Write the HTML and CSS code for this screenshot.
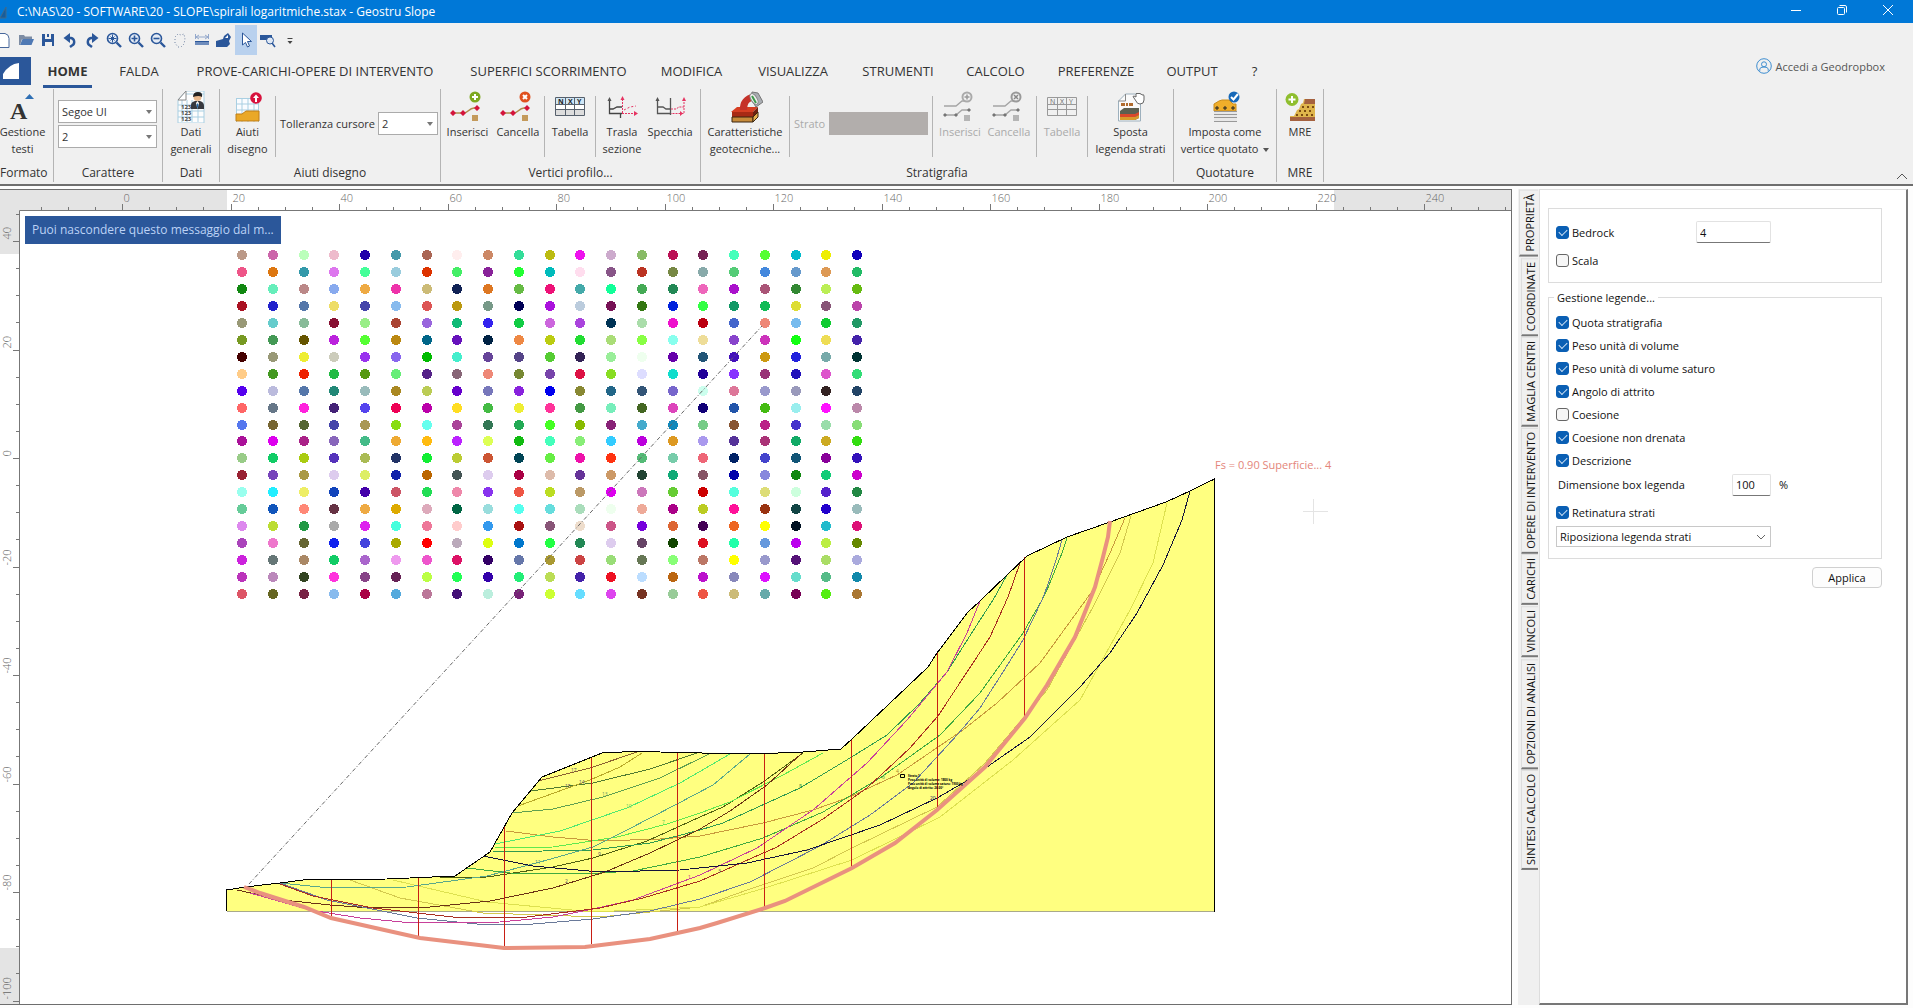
FILE: index.html
```html
<!DOCTYPE html>
<html lang="it">
<head>
<meta charset="utf-8">
<title>Geostru Slope</title>
<link rel="stylesheet" href="styles.css">
</head>
<body>
<svg width="0" height="0" class="defs" aria-hidden="true">
  <symbol id="i-lens" viewBox="0 0 16 16"><circle cx="6.500" cy="6.500" r="5" fill="#e4ebf5" stroke="#2b579a" stroke-width="1.600"/><path d="M10.500 10.500l4.500 4.500" stroke="#2b579a" stroke-width="2.400"/></symbol>
  <symbol id="i-undo" viewBox="0 0 16 16"><path d="M4 6h5a4 4 0 0 1 1 7.500L8 15" fill="none" stroke="#2b579a" stroke-width="2.400"/><path d="M8 1L1.500 6 8 11z" fill="#2b579a"/></symbol>
  <symbol id="i-poly" viewBox="0 0 36 32"><path d="M3 22h11c4 0 5-5 10-5h4" fill="none" stroke="#b08a4a" stroke-width="1.500"/><g fill="#d4143c"><path d="M0 22l3-3 3 3-3 3zM10 22l3-3 3 3-3 3zM24 17l3-3 3 3-3 3z"/></g><path fill="#c49a5c" d="M22 24h6v6h-6z"/></symbol>
  <symbol id="i-poly2" viewBox="0 0 36 32"><g fill="none" stroke="#a4a4a4" stroke-width="1.300"><path d="M2 15h12l6-5h3"/><path d="M3 24h11l6-5h8"/></g><g fill="#757575"><path d="M1 24l2-2 2 2-2 2zM12 24l2-2 2 2-2 2zM25 19l2-2 2 2-2 2z"/></g><path fill="#b5b5b5" d="M22 24h6v6h-6z"/></symbol>
</svg>

<header class="titlebar">
  <svg class="app-mark" viewBox="0 0 10 14"><path d="M0 13L6 2v11z" fill="#165d9c" stroke="#3f6a8c"/></svg>
  <h1>C:\NAS\20 - SOFTWARE\20 - SLOPE\spirali logaritmiche.stax - Geostru Slope</h1>
  <div class="win-buttons">
    <button aria-label="Riduci"><svg viewBox="0 0 12 12"><path d="M1 6.500h10"/></svg></button>
    <button aria-label="Ripristina"><svg viewBox="0 0 12 12"><rect x="1.500" y="3.500" width="7" height="7" rx="1"/><path d="M3.500 1.500h5.500q1.500 0 1.500 1.500v5.500"/></svg></button>
    <button aria-label="Chiudi"><svg viewBox="0 0 12 12"><path d="M1 1l10 10M11 1L1 11"/></svg></button>
  </div>
</header>

<section class="ribbon">
  <nav class="quick" aria-label="Accesso rapido">
    <button aria-label="Nuovo"><svg viewBox="0 0 16 16"><path d="M0 1.500h9q4 1 4 5v9H0" fill="#fff" stroke="#49689c"/></svg></button>
    <button aria-label="Apri"><svg viewBox="0 0 16 16"><path d="M1 3h5l1 1.500h7V7H4l-2 6H1z" fill="#7d8ca3"/><path d="M4.500 7H16l-2.500 6H2z" fill="#4f79b4"/></svg></button>
    <button aria-label="Salva"><svg viewBox="0 0 16 16"><path d="M2 2h3v5h6V2h3v12h-2v-4H5v4H2z" fill="#2b579a"/><path d="M7 2h2v3H7z" fill="#2b579a"/></svg></button>
    <button aria-label="Annulla"><svg viewBox="0 0 16 16"><use href="#i-undo"/></svg></button>
    <button aria-label="Ripeti"><svg viewBox="0 0 16 16"><g transform="matrix(-1 0 0 1 16 0)"><use href="#i-undo"/></g></svg></button>
    <button aria-label="Zoom finestra"><svg viewBox="0 0 16 16"><use href="#i-lens"/><path d="M6.500 2.500v8M2.500 6.500h8M4.500 4.500l4 4M8.500 4.500l-4 4" stroke="#2b579a"/></svg></button>
    <button aria-label="Zoom avanti"><svg viewBox="0 0 16 16"><use href="#i-lens"/><path d="M6.500 3.500v6M3.500 6.500h6" stroke="#2b579a" stroke-width="1.600"/></svg></button>
    <button aria-label="Zoom indietro"><svg viewBox="0 0 16 16"><use href="#i-lens"/><path d="M3.500 6.500h6" stroke="#2b579a" stroke-width="1.600"/></svg></button>
    <button aria-label="Panoramica"><svg viewBox="0 0 16 16"><path d="M3 5l3-3 3 1 3-1 1 5-1 5-3 3H6l-3-4z" fill="none" stroke="#7386a5" stroke-dasharray="1 2"/></svg></button>
    <button aria-label="Misura"><svg viewBox="0 0 16 16"><path d="M1 10h14v3H1z" fill="#6e8cbc"/><path d="M1 9.500h14" stroke="#2b579a"/><path d="M1.500 2v5M14.500 2v5M2 5h12M5 3L2 5l3 2M11 3l3 2-3 2" fill="none" stroke="#93a8cb"/></svg></button>
    <button aria-label="Rigenera"><svg viewBox="0 0 16 16"><path d="M0 15V9l7-2 1-3 4-3 3 4-2 4 1 3-3 3z" fill="#2b579a"/><path d="M9 6l3-3v3z" fill="#fff"/></svg></button>
    <button class="on" aria-label="Seleziona"><svg viewBox="0 0 16 16"><path d="M4.500 1v12l3-2.500 2 4.500 2-1-2-4.500h4z" fill="#fff" stroke="#2b579a"/></svg></button>
    <button aria-label="Cerca oggetto"><svg viewBox="0 0 16 16"><path d="M0 3h12v5H0z" fill="#2b579a"/><circle cx="10" cy="8.500" r="3.500" fill="#dfe8f4" stroke="#2b579a"/><path d="M12 11l3 4" stroke="#2b579a" stroke-width="1.600"/></svg></button>
    <button aria-label="Personalizza"><svg viewBox="0 0 16 16"><path d="M5.500 6.500h5" stroke="#444"/><path d="M5.500 9h5L8 12z" fill="#444"/></svg></button>
  </nav>

  <div class="tabbar">
    <button class="file" aria-label="File"><svg viewBox="0 0 31 28"><path d="M3 22V17Q9 7 19 6v16z" fill="#fff"/></svg></button>
    <nav class="tabs">
      <a href="#home" class="active">HOME</a><a href="#falda">FALDA</a><a href="#prove">PROVE-CARICHI-OPERE DI INTERVENTO</a><a href="#superfici">SUPERFICI SCORRIMENTO</a><a href="#modifica">MODIFICA</a><a href="#visualizza">VISUALIZZA</a><a href="#strumenti">STRUMENTI</a><a href="#calcolo">CALCOLO</a><a href="#preferenze">PREFERENZE</a><a href="#output">OUTPUT</a><a href="#help">?</a>
    </nav>
    <a href="#login" class="login"><svg viewBox="0 0 16 16" fill="none" stroke="#3f8ed0"><circle cx="8" cy="8" r="7.300"/><circle cx="8" cy="6.300" r="2.500"/><path d="M3.800 12.800V11q0-2 4.200-2t4.200 2v1.800"/></svg>Accedi a Geodropbox</a>
  </div>

  <div class="groups">
    <section class="group g-formato"><div class="tools">
      <button class="big"><svg viewBox="0 0 36 32"><text x="5" y="28" font-family="Liberation Serif" font-weight="700" font-size="24" fill="#333">A</text><path d="M20 8l4.500-5L29 8z" fill="#2f6fb4"/></svg><span>Gestione<br>testi</span></button>
    </div><h2>Formato</h2></section>

    <section class="group g-carattere"><div class="tools fonts">
      <select aria-label="Carattere"><option>Segoe UI</option></select>
      <select aria-label="Dimensione"><option>2</option></select>
    </div><h2>Carattere</h2></section>

    <section class="group g-dati"><div class="tools">
      <button class="big"><svg viewBox="0 0 36 32"><path d="M5 9l8-9h18v32H5z" fill="#fdfdfd"/><path d="M5 9l8-9h18v32H5zM9 9v22M14 9v22M19 9v22M25 9v22M5 14h26M5 20h26M5 26h26M13 3h18" fill="none" stroke="#a9cfe2"/><path d="M5 9l8-9v9z" fill="#fff" stroke="#888"/><path d="M18 18v-4q0-3 4-4h5q4 1 4 5v3z" fill="#37393f"/><circle cx="24.500" cy="6" r="4" fill="#e9b98d"/><path d="M20 6q0-5 5-5t4 5q-3-2-9 0z" fill="#222"/><path d="M24.500 10l-1.500 2 1.500 6 1.500-6z" fill="#fff"/><path d="M24.500 12l-1 2 1 4 1-4z" fill="#2469a8"/><g font-size="6" font-weight="700" fill="#444"><text x="8" y="18">123</text><text x="8" y="24">123</text><text x="8" y="30">123</text></g></svg><span>Dati<br>generali</span></button>
    </div><h2>Dati</h2></section>

    <section class="group g-aiuti"><div class="tools">
      <button class="big"><svg viewBox="0 0 36 32"><path d="M6 7h23v24H6z" fill="#fafcff"/><path d="M6.500 7v24M12 7v24M18 7v24M24 7v24M28.500 7v24M6 7.500h23M6 13h23M6 19h23" stroke="#a9cfe2" fill="none"/><path d="M6 23h6l4-3h13v10H6z" fill="#eaa827" stroke="#c07f18"/><circle cx="26" cy="7" r="5.800" fill="#d8123d"/><path d="M26 3.500l-3 3.500h2v4h2V7h2z" fill="#fff"/></svg><span>Aiuti<br>disegno</span></button>
      <i class="sep"></i>
      <div class="inline"><label for="tol">Tolleranza cursore</label><select id="tol"><option>2</option></select></div>
    </div><h2>Aiuti disegno</h2></section>

    <section class="group g-vertici"><div class="tools">
      <button class="big"><svg viewBox="0 0 36 32"><use href="#i-poly"/><circle cx="25" cy="6" r="5.500" fill="#7da81f"/><path d="M25 3v6M22 6h6" stroke="#fff" stroke-width="2"/></svg><span>Inserisci</span></button>
      <button class="big"><svg viewBox="0 0 36 32"><use href="#i-poly"/><circle cx="25" cy="6" r="5.500" fill="#e0501e"/><path d="M23 4l4 4M27 4l-4 4" stroke="#fff" stroke-width="2"/></svg><span>Cancella</span></button>
      <i class="sep"></i>
      <button class="big"><svg viewBox="0 0 36 32"><path d="M3.500 6.500h29v18h-29z" fill="#fff" stroke="#56606c"/><path d="M4 7h28v6H4z" fill="#cfe6f6"/><path d="M4 19h28v5H4z" fill="#ddd"/><path d="M3 13.500h30M3 18.500h30M13.500 6v18M22.500 6v18" stroke="#56606c"/><g font-size="7" font-weight="700" fill="#222"><text x="6" y="13">N</text><text x="16" y="13">X</text><text x="25" y="13">Y</text></g></svg><span>Tabella</span></button>
      <i class="sep"></i>
      <button class="big"><svg viewBox="0 0 36 32"><path d="M5.500 8v14.500H18M6 18h3l4-2h5M16.500 23v4" fill="none" stroke="#444" stroke-width="1.300"/><path d="M3.500 10l2-4 2 4z" fill="#555"/><path d="M18.500 8v14M18 22.500h13" fill="none" stroke="#e63462" stroke-dasharray="2 1"/><path d="M20 19l6-3 6-1" fill="none" stroke="#e63462" stroke-dasharray="2 2"/><path d="M30 20l4 2.500-4 2.500zM16.500 9l2-4 2 4z" fill="#e63462"/></svg><span>Trasla<br>sezione</span></button>
      <button class="big"><svg viewBox="0 0 36 32"><path d="M5.500 8v14.500H18M5 16h6l3 2h5M18.500 7v17" fill="none" stroke="#555" stroke-width="1.300"/><path d="M3.500 10l2-4 2 4z" fill="#555"/><path d="M32 8v14.500H19M19 18h5l3-2h5" fill="none" stroke="#e63462" stroke-dasharray="2 1"/><path d="M30 10l2-4 2 4zM28 20l3 2.500-3 2.500z" fill="#e63462"/></svg><span>Specchia</span></button>
    </div><h2>Vertici profilo...</h2></section>

    <section class="group g-strati"><div class="tools">
      <button class="big"><svg viewBox="0 0 36 32"><path d="M4 21l6-5h21l-5 5z" fill="#d63e22"/><path d="M5 21h21v5H5z" fill="#a82a14"/><path d="M5 26h21v5H5z" fill="#c78b3a" stroke="#3a2410"/><path d="M26 21l5-5v5l-5 5z" fill="#6e2010"/><path d="M26 26l5-5v5l-5 5z" fill="#e2ad4f" stroke="#3a2410"/><path d="M13 19q-1-13 14-17l-2 8q-5 1-5 9z" fill="#c5322a"/><path d="M25 1l6 1 5 9-7 5-5-8z" fill="#a9adb2" stroke="#777"/><ellipse cx="27" cy="8" rx="3" ry="6" transform="rotate(-32 27 8)" fill="#eee" stroke="#888"/><path d="M25 5l4 7" stroke="#3c9a4a" stroke-width="2"/></svg><span>Caratteristiche<br>geotecniche...</span></button>
      <i class="sep"></i>
      <div class="inline off"><label for="strato">Strato</label><input id="strato" class="swatch" disabled></div>
      <i class="sep"></i>
      <button class="big off"><svg viewBox="0 0 36 32"><use href="#i-poly2"/><circle cx="25" cy="6" r="4.500" fill="#f0f0f0" stroke="#aaa" stroke-width="2"/><path d="M25 3.500v5M22.500 6h5" stroke="#999" stroke-width="1.500"/></svg><span>Inserisci</span></button>
      <button class="big off"><svg viewBox="0 0 36 32"><use href="#i-poly2"/><circle cx="25" cy="6" r="4.500" fill="#f0f0f0" stroke="#999" stroke-width="2"/><path d="M23 4l4 4M27 4l-4 4" stroke="#888" stroke-width="1.500"/></svg><span>Cancella</span></button>
      <i class="sep"></i>
      <button class="big off"><svg viewBox="0 0 36 32"><path d="M3.500 6.500h29v18h-29zM3 13.500h30M3 18.500h30M13.500 6v18M22.500 6v18" fill="none" stroke="#999"/><g font-size="7" fill="#666"><text x="6" y="13">N</text><text x="16" y="13">X</text><text x="25" y="13">Y</text></g></svg><span>Tabella</span></button>
      <i class="sep"></i>
      <button class="big"><svg viewBox="0 0 36 32"><path d="M5.500 10l7-7h15v27h-22z" fill="#fafafa" stroke="#9db0bd"/><path d="M12.500 3v7h-7" fill="none" stroke="#888"/><path d="M8 12h4v3H8zM13 12h2v3h-2zM16 12h4v3h-4z" fill="#b06b2e"/><path d="M7 20l4-3h15v10l-4 2H7z" fill="#5d5f50"/><path d="M7 23h15l4-2v3l-4 2H7z" fill="#d9482a"/><path d="M7 26h15l4-2v3l-4 2H7z" fill="#d99a2b"/><path d="M21 7q-2-2 0-2l2 1V3q1-2 2 0 1-2 2 0 1-1 2 1 2-1 2 1v4q0 4-4 4-3 0-4-3z" fill="#fff" stroke="#666"/></svg><span>Sposta<br>legenda strati</span></button>
    </div><h2>Stratigrafia</h2></section>

    <section class="group g-quote"><div class="tools">
      <button class="big"><svg viewBox="0 0 36 32"><path d="M7 13l5-3 3-1h7l4 4h3v7H7z" fill="#f0ae2a" stroke="#c98c1c"/><path d="M7 21h23v9H7z" fill="#e8e8e8"/><path d="M7 20.500h23M7 23.500h23M7 26.500h23M7 30.500h23" stroke="#999"/><path d="M8 17h4M10 15v4M16 17h4M18 15v4M24 17h4M26 15v4" stroke="#222"/><circle cx="27" cy="6" r="5.500" fill="#1668b8"/><path d="M24 6l2.500 2.500L31 3" fill="none" stroke="#fff" stroke-width="2"/></svg><span>Imposta come<br>vertice quotato <b class="caret"></b></span></button>
    </div><h2>Quotature</h2></section>

    <section class="group g-mre"><div class="tools">
      <button class="big"><svg viewBox="0 0 36 32"><path d="M8 25h4l3-6 2-1 2-5 2-1 1-4h11v20H8z" fill="#dfb54c"/><path d="M23 8h10v5H22zM8 26h25v4H8z" fill="#a5623f"/><path d="M20 16h12M17 20h15M14 24h17" stroke="#7b4c12" stroke-width="2" stroke-dasharray="2 3"/><circle cx="10" cy="8.500" r="6.500" fill="#8fbe2f"/><path d="M10 5v7M6.500 8.500h7" stroke="#fff" stroke-width="2"/></svg><span>MRE</span></button>
    </div><h2>MRE</h2></section>
    <button class="fold" aria-label="Comprimi"><svg viewBox="0 0 12 8"><path d="M1 7l5-5 5 5" fill="none" stroke="#555"/></svg></button>
  </div>
</section>

<main>
  <section class="canvas">
    <svg id="drawing" role="img" aria-label="Sezione del pendio">
      <g transform="translate(0,-190)" id="sheet">
        <rect x="0" y="190" width="227" height="20" fill="#e4e4e4"/><rect x="1334" y="190" width="100%" height="20" fill="#e4e4e4"/>
        <rect x="0" y="190" width="19" height="64" fill="#e4e4e4"/><rect x="0" y="948" width="19" height="100%" fill="#e4e4e4"/>
        <path d="M19.500 2000V210.500H4000" fill="none" stroke="#777"/>
        <g id="ruler"></g>
        <path fill="#ffff80" d="M227 890L245 887 280 883 307 880 333 880 387 879 455 876 490 852 512 813 542 777 602 753 643 751 660 752 723 753 765 753 803 752 841 749 852 739 907 687 928 667 937 653 968 612 980 601 1007 575 1027 556 1067 537 1110 522 1166 502 1190 491 1214.500 479V911.500H227z"/>
        <path d="M227 911.500H1214" stroke="#a9a98a"/>
        <g fill="none" class="crisp">
          <path stroke="#d3c84e" d="M350 880L400 898 483 913 600 917 700 907 747 890 813 868 852 848 937 807 985 763 1047 690 1093 607 1120 553 1131 516"/>
          <path stroke="#dde050" d="M393 880L487 902 593 912 700 907 765 888 852 860 940 817 1013 760 1080 700 1130 610 1153 563 1167 503"/>
          <path stroke="#c89a3c" d="M506 831L553 837 600 841 660 839 700 836 763 823 813 810 847 798 897 775 963 730 997 703 1040 663 1080 608 1093 590 1110 553 1125 518"/>
          <path stroke="#506010" d="M440 878L487 877 553 867 593 858 647 841 700 817 723 807 763 782 803 753"/>
          <path stroke="#40aa40" d="M467 868L510 873 583 874 633 871 700 857 763 838 823 812 880 778 940 735 980 693 1023 633 1042 600 1047 590 1062 553 1067 538"/>
          <path stroke="#309a50" d="M493 852L593 850 650 843 700 830 723 823 800 788 850 758 887 735 920 703 947 672 980 620 993 600 1007 575"/>
          <path stroke="#60e850" d="M495 848L553 847 617 837 667 824 700 813 730 802 783 775 823 753"/>
          <path stroke="#50e870" d="M495 844L560 831 627 808 680 783 730 754"/>
          <path stroke="#60a050" d="M512 813L553 809 603 797 660 778 709 754"/>
          <path stroke="#507a30" d="M530 791L593 783 650 769 697 753"/>
          <path stroke="#8a6030" d="M538 781L590 768 637 752"/>
          <path stroke="#b8a828" d="M518 806L590 780 620 767 642 753"/>
          <path stroke="#5aa88a" d="M280 883L330 888 407 887 487 876 540 862 593 847 627 830 677 804 713 785 750 754"/>
          <path stroke="#6a3214" d="M237 890L283 900 330 905 357 907 430 907 490 901 553 888 605 872 650 853 700 829 730 811 767 785 802 753"/>
          <path stroke="#6a7a9a" d="M280 883L327 900 377 910 417 918 477 924 533 924 593 919 650 911 700 899 750 882 820 846 870 815 913 783 958 734 980 708 1003 672 1023 640 1042 600 1047 587 1057 557 1062 540"/>
          <path stroke="#c8409a" d="M250 893L310 910 360 918 413 923 500 922 553 917 593 909 633 900 700 875 757 848 813 810 867 763 907 720 947 672 967 633 980 601"/>
          <path stroke="#a82e22" d="M280 884L313 896 373 908 453 917 527 917 600 908 643 898 700 881 777 847 823 819 867 788 910 748 938 716 973 663 990 637 1008 597 1020 563"/>
          <path stroke="#14143c" d="M483 856L533 866 600 872 680 870 747 863 807 850 880 825 937 798 970 779 987 767 1030 737 1080 687 1110 653 1137 613 1163 565 1182 520 1190 491"/>
        </g>
        <path class="crisp" fill="none" stroke="#c81e14" d="M331.500 880V916M418.500 878V936M504.500 825V946M591.500 757V944M677.500 753V932M764.500 753V907M851.500 739V867M937.500 653V810M1024.500 557V717"/>
        <path class="crisp" fill="none" stroke="#000" d="M226.500 911V890L245 887 280 883 307 879.500 333 879.500 387 879 455 876 490 852 512 813 542 777 602 753 643 751 660 752 723 753.500 765 753.500 803 752 841 749 852 739 907 687 928 667 937 653 968 612 980 601 1007 575 1027 556 1067 537 1110 522 1166 502 1190 491 1214.500 479V912"/>
        <path fill="none" stroke="#e9917f" stroke-width="4" d="M244 887L260 893 304 907 331 918 420 938 504 948 585 947 650 939 700 928 717 923 765 908 785 901 852 868 895 843 937 810 985 767 1025 718 1047 685 1075 637 1095 587 1103 557 1108 537 1110 521"/>
        <g id="dots" class="crisp"></g>
        <path d="M249 884L762 326" stroke="#666" stroke-dasharray="4 2 1 2" fill="none"/>
        <g font-size="5" fill="#556">
          <text x="571" y="772">17</text><text x="565" y="788">15</text><text x="579" y="784">14</text><text x="602" y="796" fill="#696">13</text><text x="626" y="808" fill="#6c6">10</text><text x="662" y="824" fill="#5c5">7</text><text x="535" y="864" fill="#488">11</text><text x="598" y="856">9</text><text x="565" y="883">2</text><text x="688" y="879" fill="#c39">1</text><text x="718" y="873">3</text><text x="799" y="788" fill="#284">8</text><text x="882" y="779" fill="#284">6</text><text x="806" y="853">5</text><text x="930" y="800" fill="#226">20</text><text x="896" y="773" fill="#a83">4</text>
        </g>
        <path fill="#ffff80" stroke="#000" d="M900.500 774.500h4v3h-4z"/>
        <g font-size="3" fill="#000" font-weight="700"><text x="908" y="777">Strato 1</text><text x="908" y="781">Peso unità di volume: 1800 kg</text><text x="908" y="785">Peso unità di volume saturo: 1900 kg</text><text x="908" y="789">Angolo di attrito: 26.00°</text></g>
        <text x="1215" y="469" font-size="11" fill="#e4857a">Fs = 0.90 Superficie... 4</text>
        <path d="M1303 511.500h25M1313.500 499v25" stroke="#e4e4e4"/>
      </g>
    </svg>
    <p class="notice">Puoi nascondere questo messaggio dal m...</p>
  </section>

  <aside class="side">
    <nav class="vtabs">
      <button class="active">PROPRIETÀ</button><button>COORDINATE</button><button>MAGLIA CENTRI</button><button>OPERE DI INTERVENTO</button><button>CARICHI</button><button>VINCOLI</button><button>OPZIONI DI ANALISI</button><button>SINTESI CALCOLO</button>
    </nav>
    <form class="panel">
      <fieldset class="box first">
        <div class="row"><label><input type="checkbox" checked>Bedrock</label><input class="field wide" type="text" value="4" aria-label="Valore bedrock"></div>
        <div class="row"><label><input type="checkbox">Scala</label></div>
      </fieldset>
      <fieldset class="box second">
        <legend>Gestione legende...</legend>
        <label><input type="checkbox" checked>Quota stratigrafia</label>
        <label><input type="checkbox" checked>Peso unità di volume</label>
        <label><input type="checkbox" checked>Peso unità di volume saturo</label>
        <label><input type="checkbox" checked>Angolo di attrito</label>
        <label><input type="checkbox">Coesione</label>
        <label><input type="checkbox" checked>Coesione non drenata</label>
        <label><input type="checkbox" checked>Descrizione</label>
        <div class="row dim"><label for="dim">Dimensione box legenda</label><input id="dim" class="field" type="text" value="100"><span>%</span></div>
        <label class="hatch"><input type="checkbox" checked>Retinatura strati</label>
        <select aria-label="Legenda strati"><option>Riposiziona legenda strati</option></select>
      </fieldset>
      <button type="button" class="apply">Applica</button>
    </form>
  </aside>
</main>
<script src="drawing.js"></script>
</body>
</html>
```
FILE: styles.css
```css
* { box-sizing: border-box; }
html, body { height: 100%; }
body { margin: 0; display: flex; flex-direction: column; background: #fdfdfd; color: #333; font: 11px/17px "Open Sans", "Noto Sans", sans-serif; overflow: hidden; }
h1, h2, p { margin: 0; font-weight: 400; }
button { border: 0; padding: 0; background: none; color: inherit; font: inherit; }
a { color: inherit; text-decoration: none; }
.defs { position: absolute; }
select {
  appearance: none; border: 1px solid #ababab; border-radius: 0; padding: 0 20px 0 3px; color: #333; font: inherit; height: 23px;
  background: #fff url("data:image/svg+xml,%3Csvg xmlns='http://www.w3.org/2000/svg' width='6' height='4'%3E%3Cpath d='M0 0h6L3 4z' fill='%23777'/%3E%3C/svg%3E") no-repeat right 4px center;
}

.titlebar { flex: none; height: 23px; background: #0078d7; color: #fff; display: flex; align-items: center; }
.app-mark { width: 10px; height: 14px; margin-right: 7px; }
.titlebar h1 { flex: 1; font-size: 12px; line-height: 23px; }
.win-buttons { display: flex; height: 100%; padding-right: 2px; }
.win-buttons button { width: 46px; display: grid; place-items: center; padding-bottom: 3px; }
.win-buttons svg { width: 12px; height: 12px; fill: none; stroke: #fff; }

.ribbon { flex: none; background: #f0f0f0; border-bottom: 2px solid #6e6e6e; }
.quick { display: flex; height: 34px; margin-left: -7px; padding-top: 2px; }
.quick button { width: 22px; height: 30px; display: grid; place-items: center; }
.quick .on { background: #b9d1ee; }
.quick svg { width: 16px; height: 16px; }
.tabbar { display: flex; height: 28px; }
.file { flex: none; width: 31px; background: #2b579a; }
.file svg { display: block; width: 31px; height: 28px; }
.tabs { flex: 1; display: grid; padding-left: 12px; grid-template-columns: 49px 94px 258px 209px 77px 126px 84px 111px 90px 102px 23px; justify-content: start; font-size: 13px; line-height: 28px; text-align: center; white-space: nowrap; }
.tabs a { display: flex; justify-content: center; }
.tabs .active { font-weight: 700; border-bottom: 3px solid #2b579a; }
.login { display: flex; align-items: center; gap: 4px; height: 18px; padding-right: 28px; color: #555; }
.login svg { width: 16px; height: 16px; }

.groups { display: flex; height: 99px; padding: 4px 0 2px; }
.group { flex: none; display: flex; flex-direction: column; border-right: 1px solid #b4b4b4; }
.group h2 { font-size: 12px; line-height: 18px; text-align: center; white-space: nowrap; }
.tools { height: 75px; display: grid; align-items: start; justify-content: start; padding-top: 2px; }
.g-formato { width: 54px; padding-right: 8px; }
.g-carattere { width: 109px; }
.g-dati { width: 57px; }
.g-aiuti { width: 221px; }
.g-vertici { width: 260px; }
.g-strati { width: 473px; }
.g-quote { width: 103px; }
.g-mre { width: 47px; }
.g-formato .tools, .g-dati .tools, .g-quote .tools, .g-mre .tools { justify-content: center; }
.g-aiuti .tools { grid-template-columns: 55px 1px 1fr; }
.g-vertici .tools { grid-template-columns: 53px 48px 3px 50px 1px 52px 44px; }
.g-strati .tools { grid-template-columns: 88px 1px 142px 1px 54px 44px 6px 50px 1px 85px; }
.big { display: flex; flex-direction: column; align-items: center; white-space: nowrap; }
.big svg { width: 36px; height: 32px; }
.off { color: #aaa; }
.sep { width: 1px; height: 61px; margin-top: 5px; justify-self: end; background: #b4b4b4; }
.caret { display: inline-block; border: 3px solid transparent; border-top: 4px solid #555; border-bottom: 0; margin-left: 2px; vertical-align: middle; }
.tools.fonts { grid-template-columns: 99px; gap: 2px; padding: 11px 4px 0; align-content: start; }
.inline { display: flex; align-items: center; gap: 3px; padding: 21px 4px 0 4px; justify-content: space-between; white-space: nowrap; }
.inline select { width: 60px; }
.swatch { width: 99px; height: 23px; border: 0; background: #b2aeac; }
.fold { margin: auto 5px -2px auto; width: 12px; height: 12px; display: flex; }
.fold svg { width: 12px; height: 8px; }

main { flex: 1; min-height: 0; display: flex; padding: 3px 5px 3px 0; }
.canvas { flex: 1; min-width: 0; position: relative; border: 1px solid #6e6e6e; border-left: 0; background: #fff; overflow: hidden; }
#drawing { display: block; width: 100%; height: 100%; }
.crisp { shape-rendering: crispEdges; }
.ruler-text { font-size: 11px; font-weight: 300; fill: #666; }
.notice { position: absolute; left: 25px; top: 26px; width: 256px; height: 28px; padding: 0 7px; font-size: 12px; line-height: 28px; background: #2b579a; color: #bcd2f5; white-space: nowrap; }

.side { flex: none; width: 390px; margin-left: 6px; display: flex; }
.vtabs { width: 21px; background: #f0f0f0; display: flex; flex-direction: column; align-items: flex-end; padding: 1px 1px 0 0; }
.vtabs button { writing-mode: vertical-rl; transform: rotate(180deg); width: 17px; padding: 3px 0; margin-bottom: 1px; color: #111; line-height: 15px; white-space: nowrap; border-top: 2px solid #777; border-right: 1px solid #ddd; border-bottom: 1px solid #ddd; }
.vtabs .active { width: 19px; }
.panel { flex: 1; background: #fff; border: 1px solid #ddd; border-right: 2px solid #777; border-bottom: 2px solid #777; padding: 18px 24px 0 8px; color: #111; }
.box { margin: 0; padding: 0 0 0 7px; border: 1px solid #dcdcdc; min-width: 0; }
.box label { display: flex; align-items: center; gap: 3px; }
.box input[type="checkbox"] { appearance: none; flex: none; position: relative; margin: 0; width: 13px; height: 13px; border: 1px solid #666; border-radius: 3px; background: #f6f6f6; }
.box input[type="checkbox"]:checked { background: #0a5fb4; border-color: #0a5fb4; }
.box input[type="checkbox"]:checked::after { content: ""; position: absolute; left: 2px; top: 2px; width: 7px; height: 4px; border: solid #cfe2f5; border-width: 0 0 1px 1px; transform: rotate(-45deg); }
.first { height: 75px; padding-top: 11px; }
.row { display: flex; align-items: center; height: 24px; }
.first .row + .row { margin-top: 4px; }
.first .row label { width: 140px; }
.field { width: 39px; height: 22px; padding: 0 3px; border: 1px solid #e2e2e2; border-bottom-color: #777; border-radius: 2px; font: inherit; color: #111; background: #fff; }
.wide { width: 75px; }
.second { margin-top: 6px; height: 270px; padding-bottom: 10px; }
.second legend { padding: 0 3px; margin-left: -2px; }
.second > label { height: 23px; }
.second legend + label { margin-top: 5px; }
.dim { height: 25px; }
.dim label { width: 176px; padding-left: 2px; }
.dim span { margin-left: 8px; }
.second .hatch { margin-top: 2px; height: 27px; }
.second select { display: block; width: 215px; height: 21px; border-color: #c8c8c8; color: #111; background-image: url("data:image/svg+xml,%3Csvg xmlns='http://www.w3.org/2000/svg' width='10' height='6'%3E%3Cpath d='M1 1l4 4 4-4' fill='none' stroke='%23666'/%3E%3C/svg%3E"); }
.apply { display: block; width: 70px; height: 21px; margin: 8px 0 0 auto; border: 1px solid #d0d0d0; border-radius: 4px; background: #fdfdfd; }
```
FILE: drawing.js
```js
const NS = "http://www.w3.org/2000/svg";
function add(parent, tag, attrs, text) {
  const el = document.createElementNS(NS, tag);
  for (const k in attrs) el.setAttribute(k, attrs[k]);
  if (text !== undefined) el.textContent = text;
  parent.appendChild(el);
}

// Rulers: 20 units take 108.5 px, with three minor ticks between labels
const ruler = document.getElementById("ruler");
function drawRulers() {
  const box = document.getElementById("drawing").getBoundingClientRect();
  const right = box.width - 2, bottom = box.height + 190 - 1;
  ruler.replaceChildren();
  let ticks = "";
  for (let i = -3; 122 + i * 27.125 < right; i++) {
    const x = Math.round(122 + i * 27.125) + 0.5, major = i % 4 === 0;
    ticks += `M${x} ${major ? 204 : 207}V210`;
    if (major && x + 24 < right) add(ruler, "text", { x: x + 1, y: 202, class: "ruler-text" }, i * 5);
  }
  for (let i = -1; 242 + i * 27.125 < bottom; i++) {
    const y = Math.round(242 + i * 27.125) - 0.5, major = i % 4 === 0;
    ticks += `M${major ? 13 : 16} ${y}H19`;
    if (major) add(ruler, "text", { transform: `translate(11,${y - 2}) rotate(-90)`, class: "ruler-text" }, 40 - i * 5);
  }
  add(ruler, "path", { d: ticks, stroke: "#777", fill: "none" });
}
drawRulers();
addEventListener("resize", drawRulers);

// Grid of trial centres, one colour for each centre
const rows = [
  "b98c6abfbebc20a49aa65feec863d9bb1e1ecac8b6b157254fb5f30bcee010b",
  "e58d7139ad7e4f99cdd304e68292f30bbfde858b327848aa5c748d69cd952b6",
  "1816ebb888aeea4e3acb7125d726b4e174aa1f94a5285e6ba1ca57383be56b1",
  "a1222c57aed644a8bed55b91798005a1dbcd71537102d3f41961b5dd3857b4a",
  "9976cc8b98139e8a4396d1b732e1c4c6da4d035adae1cb0146ce877be1c3296",
  "792495650b2d5f3b8106861b024e84bc12d3ad78f48feed984cc3b1f1ed542a",
  "400997ee3ccb93e86e0b04ec6495485c33259e9efe60a25741bc9122d7aa033",
  "fc8492e202b45916e7528867e8778374ad148d2ddf1dc20983f93721bd5c3d7",
  "50ebbd57a2879bba82bc560c77b82d00e88326835776ccfed7999c99b322246",
  "f66678f2d42754ee05b0afd24b4ee3f394947eb462d4b10725a4b19eef1fb8a",
  "57e76356344aa958d16fea493752a54f28b08274ac18b7c8853b2843c9da8d7",
  "a19d0ea2886b4b8ea3fb1b2fdf51b14fb8e73cfb0dd92a9e539a371a6ca23d1",
  "9c81c6ac153bab52361e3bc3c530456e4e1af315b77cae6702644c15780931b",
  "92374ba94dcede612ab60455dcea04dba639c962431a785600a88d1811c7c0c",
  "9fe2efee614b40ac562d5e8a83ee54bd2b96d0ec7b6c3c005fddd7cfd52c284",
  "6c915bf87634ea4da0dab0649dd5fe6ddadbefeea9a08bc2f1993114420c9bb",
  "d8ebd3294aaad2e4fde79fcc39ea11857edcc5870dd63405e62ff00122bcd17",
  "a4be7c66312e44daa0f00babdf107c2f4285dce646140d122fa69db0ebe4680",
  "c2d677a861c6a6ce9ee5cd1630667aa93c449d76758f7b76ff099c517ad6aad",
  "b3bb8b342f3d848625bf42f530a2e7bd542ae12bdfb61b1c88bd1f6dc5b818a",
  "d566627248bea045adb79417bed727cf36dfd4e7329c9e54cb76aa7055e1a73"
];
const dots = document.getElementById("dots");
rows.forEach((row, r) => {
  for (let c = 0; c < 21; c++) {
    add(dots, "circle", { cx: Math.round(242 + c * 30.75), cy: Math.round(255.3 + r * 16.92), r: 5, fill: "#" + row.substr(c * 3, 3) });
  }
});
```
